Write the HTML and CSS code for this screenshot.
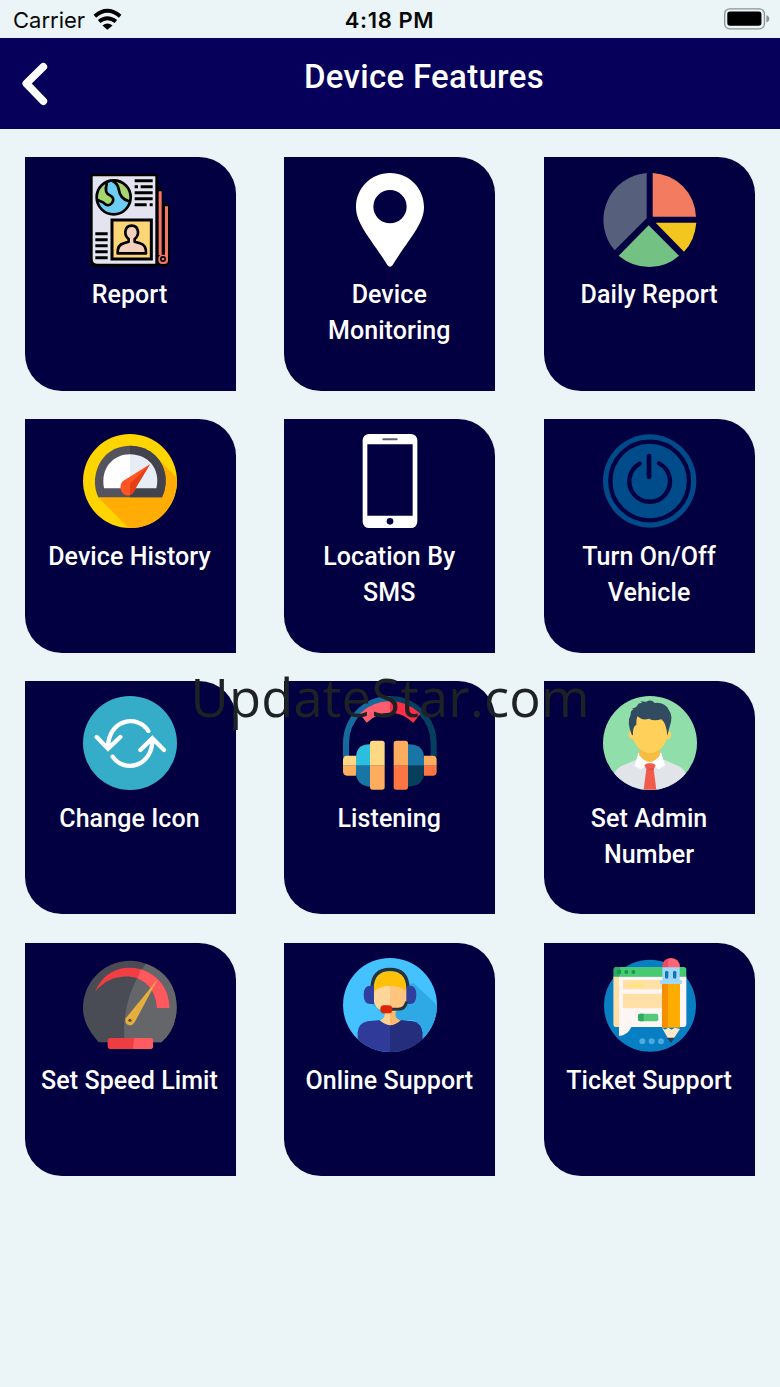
FILE: index.html
```html
<!DOCTYPE html>
<html lang="en">
<head>
<meta charset="utf-8">
<title>Device Features</title>
<link rel="stylesheet" href="styles.css">
</head>
<body>
<div class="screen">
  <div class="status">
    <div class="carrier"><span>Carrier</span>
      <svg class="wifi" viewBox="281 22 87 67"><g fill="none" stroke="#000" stroke-width="12"><path d="M286 47Q324 14 363 47"/><path d="M299 63Q324 43 350 63"/></g><path d="M309 75Q324 64 340 75L324 88Z"/></svg>
    </div>
    <div class="time">4:18 PM</div>
    <div class="power"><svg class="battery" viewBox="1002 24 140 67"><rect x="1004" y="26.500" width="121" height="61" rx="15" fill="none" stroke="#8d9292" stroke-width="4"/><rect x="1012" y="35" width="104" height="43" rx="8"/><path d="M1131 46Q1140 49 1140 57T1131 68Z" fill="#8d9292"/></svg></div>
  </div>
  <header class="bar">
    <svg class="back" viewBox="60 180 90 140"><path d="M130 200L79 250L130 303" fill="none" stroke="#fff" stroke-width="23" stroke-linecap="round" stroke-linejoin="round"/></svg>
    <h1>Device Features</h1>
  </header>
  <main class="grid">
    <div class="card">
      <svg viewBox="189 68 282 282">
        <path d="M411 106Q429 102 430 160Q450 155 450 180V330Q448 350 428 350L405 340Z"/>
        <rect x="211" y="70" width="203" height="279" rx="10"/>
        <path d="M218 78H406V340H230Q218 340 218 326Z" fill="#e3e4ef"/>
        <circle cx="281" cy="141" r="50" fill="#6dcdf3"/>
        <path d="M256 96Q233 110 231 146Q245 156 264 168Q281 162 278 145Q260 132 261 116ZM282 93Q292 100 296 119Q305 146 327 153Q334 130 321 112Q306 92 282 93Z" fill="#a8d66e"/>
        <path d="M261 98Q251 128 270 135Q286 143 276 158Q264 172 250 157L233 149M278 93Q292 98 296 116Q300 146 327 153" fill="none" stroke="#000" stroke-width="8"/>
        <circle cx="281" cy="141" r="51" fill="none" stroke="#000" stroke-width="8"/>
        <path d="M344 91H398M344 109H354M362 109H398M344 127H398M344 145H398M344 163H380M389 163H398M226 250H263M226 268H263M226 286H263M226 304H263M226 322H263" stroke="#000" stroke-width="9"/>
        <rect x="276" y="209" width="118" height="117" fill="#fcd577" stroke="#000" stroke-width="9"/>
        <path d="M293 309Q292 283 311 279L326 274V266Q315 258 316 244Q318 226 335 226T354 244Q355 258 344 266V274L360 279Q379 284 378 309Z" fill="#f2d0bb" stroke="#000" stroke-width="8" stroke-linejoin="round"/>
        <path d="M416 123H425V314H416ZM435 168H444V322H435Z" fill="#f57769"/>
        <rect x="415" y="313" width="29" height="28" rx="12" fill="#f57769"/><circle cx="429" cy="326" r="6.500" fill="#f57769" stroke="#000" stroke-width="5"/>
      </svg><p>Report</p>
    </div>
    <div class="card">
      <svg viewBox="0 0 282 282"><path fill="#fff" fill-rule="evenodd" d="M141 0C84 0 39 45 39 102C39 154 85 198 133 276Q141 287 149 276C197 198 243 154 243 102C243 45 198 0 141 0ZM141 51A50 50 0 1 1 141 151A50 50 0 1 1 141 51Z"/></svg>
      <p>Device Monitoring</p>
    </div>
    <div class="card">
      <svg viewBox="190 68 282 282"><path fill="#56607d" d="M321 68A141 141 0 0 0 225 300L321 204Z"/><path fill="#f37c60" d="M339 68V199H469A136 136 0 0 0 339 68Z"/><path fill="#f2c61f" d="M348 217H470Q465 271 433 304Z"/><path fill="#73c284" d="M327 225L418 316Q380 350 329 350T237 316Z"/></svg>
      <p>Daily Report</p>
    </div>
    <div class="card">
      <svg viewBox="189 59 282 282"><circle cx="330" cy="200" r="141" fill="#ffd500"/><path fill="#ffad05" d="M233 247L326 341Q394 342 435 295Q475 248 470 190L411 130Z"/><path fill="#55545e" d="M235 249Q223 224 225 195C230 135 272 94 330 94S435 137 437 195Q438 224 426 249Z"/><path fill="#43434d" d="M330 94C390 94 435 137 437 195Q438 224 426 249H330Z"/><path fill="#fff" d="M252 222C240 160 281 120 330 120V222Z"/><path fill="#e7edf6" d="M330 120C383 120 423 163 409 222H330Z"/><path fill="#ff5525" d="M390 150L309 200C292 217 306 244 325 244C340 241 344 229 350 216Z"/><path fill="#e63f16" d="M390 150L330 208V243Q343 236 350 216Z"/></svg>
      <p>Device History</p>
    </div>
    <div class="card">
      <svg viewBox="189 59 282 282"><rect x="248" y="59" width="164" height="282" rx="19" fill="#fff"/><path d="M262 90H398V304H262Z" fill="#020040"/><path d="M310 75H350" stroke="#5b5c78" stroke-width="6" stroke-linecap="round"/><circle cx="330" cy="321" r="10" fill="#020040"/></svg>
      <p>Location By SMS</p>
    </div>
    <div class="card">
      <svg viewBox="189 59 282 282"><circle cx="329" cy="200" r="140" fill="#004b8a"/><g fill="none" stroke="#020040"><circle cx="329" cy="200" r="118" stroke-width="13"/><path d="M299 148A61 61 0 1 0 357 147" stroke-width="13" stroke-linecap="round"/><path d="M327 125V188" stroke-width="14" stroke-linecap="round"/></g></svg>
      <p>Turn On/Off Vehicle</p>
    </div>
    <div class="card">
      <svg viewBox="189 79 282 282"><circle cx="330" cy="220" r="141" fill="#35acc8"/><path d="M385 184C355 134 264 146 264 235M230 202L264 237L301 202M278 261C311 311 399 292 397 208M361 241L397 206L432 241" fill="none" stroke="#fff" stroke-width="13" stroke-linecap="round"/></svg>
      <p>Change Icon</p>
    </div>
    <div class="card">
      <svg viewBox="189 79 282 282">
        <path d="M198 262V222A131 134 0 0 1 330 88" fill="none" stroke="#176a9c" stroke-width="18"/><path d="M330 88A131 134 0 0 1 461 222V262" fill="none" stroke="#073f60" stroke-width="18"/>
        <path fill="#ff5d6d" d="M239 132Q278 95 330 95V129Q293 128 260 159Z"/><path fill="#ff2e48" d="M330 95Q382 95 421 132L400 159Q367 128 330 129Z"/>
        <path fill="#ffd783" d="M228 258H201Q189 258 189 270V288H228Z"/><path fill="#fead5e" d="M189 288H228V318H201Q189 318 189 304Z"/>
        <path fill="#2cbedd" d="M270 224Q228 223 228 266V288H270Z"/><path fill="#1975a6" d="M228 288H270V351Q228 348 228 307Z"/>
        <path fill="#ffd884" d="M270 288V221Q270 213 278 213H306Q314 213 314 221V288Z"/><path fill="#fead5e" d="M270 288H314V352Q314 360 306 360H278Q270 360 270 352Z"/>
        <path fill="#fead5e" d="M341 288V221Q341 213 349 213H376Q384 213 384 221V288ZM432 258H458Q470 258 470 270V288H432Z"/><path fill="#fe7544" d="M341 288H384V352Q384 360 376 360H349Q341 360 341 352ZM432 288H470V306Q470 318 458 318H432Z"/>
        <path fill="#1975a6" d="M384 224Q432 223 432 266V288H384Z"/><path fill="#063f5b" d="M384 288H432V307Q432 350 384 351Z"/>
      </svg><p>Listening</p>
    </div>
    <div class="card">
      <svg viewBox="39 34 282 282">
        <clipPath id="adminClip"><circle cx="180" cy="175" r="141"/></clipPath><g clip-path="url(#adminClip)"><path fill="#90dfaa" d="M39 34H321V316H39Z"/><path fill="#e1e5ea" d="M55 316Q65 253 102 241L145 222H215L258 241Q295 253 305 316Z"/><path fill="#fff" d="M145 205L134 245L153 254L180 235L206 254L225 242L214 205Z"/><path fill="#f5bd43" d="M150 183H210V211Q180 253 147 211Z"/></g>
        <path fill="#ffd05a" d="M129 98Q180 62 232 98V139Q245 139 244 150Q242 164 230 164C219 195 199 205 180 205S139 190 130 164Q116 162 115 149Q117 137 129 139Z"/>
        <path fill="#314c60" d="M126 152Q109 112 122 90Q121 78 131 74L125 72Q135 71 141 65Q143 54 157 55Q151 49 150 49Q163 52 169 51Q184 43 194 55Q223 51 236 75Q252 94 238 129L232 153Q229 115 214 104Q190 110 177 102Q158 109 142 95Q138 107 139 120Q127 126 129 151Z"/>
        <path fill="#f15b4d" d="M163 242Q170 234 180 236Q190 234 197 242L191 254L199 315H161L169 254Z"/><path fill="#d94e43" d="M169 254L191 250V257Z"/>
      </svg><p>Set Admin Number</p>
    </div>
    <div class="card">
      <svg viewBox="69 54 282 282"><path fill="#4a4c55" d="M116 307C90 277 69 245 69 203C69 126 132 62 210 62S350 126 350 203Q349 268 304 307Z"/><path fill="#64666a" d="M258 71Q350 105 350 203Q349 268 304 307H194Q182 178 258 71Z"/><path fill="#f03e42" d="M106 154C130 97 175 82 211 83C280 85 328 138 328 204H291C287 153 256 114 211 110C171 106 133 121 106 154Z"/><path fill="#ff5960" d="M243 88Q326 119 328 204H291Q286 137 233 115Z"/><path fill="#e6af3d" d="M293 118L224 247Q218 257 207 256Q192 250 197 235Z"/><circle cx="210" cy="241" r="5" fill="#5f5445"/><rect x="143" y="294" width="136" height="33" rx="8" fill="#ee3d40"/><path fill="#ff5b60" d="M222 294H271Q279 294 279 302V319Q279 327 271 327H219Z"/></svg>
      <p>Set Speed Limit</p>
    </div>
    <div class="card">
      <svg viewBox="849 54 282 282">
        <clipPath id="agentClip"><circle cx="990" cy="195" r="141"/></clipPath><g clip-path="url(#agentClip)"><path fill="#43c2ff" d="M849 54H1131V336H849Z"/><path fill="#2fa9e6" d="M1060 129L1140 203V310L1085 320L1060 240H992L921 180Z"/><path fill="#303b99" d="M893 336V277Q895 250 922 244L970 239H1013L1056 244Q1084 249 1087 277V336Z"/><path fill="#252e7d" d="M990 239L1056 244Q1084 249 1087 277V336H990Z"/></g>
        <path fill="#ffd18e" d="M974 210H1006V229Q1012 240 1022 241Q990 270 959 241Q974 235 974 225Z"/><path fill="#ffb96e" d="M990 215H1006V229Q1012 240 1022 241Q1007 254 990 256Z"/>
        <path fill="#ffd59a" d="M941 137H1040V175Q1038 216 990 216T941 175Z"/><path fill="#ffc47e" d="M990 137H1040V175Q1038 216 990 216Z"/><path fill="#ffc107" d="M941 153C940 111 959 94 990 94S1041 111 1040 153Q1013 137 990 137T941 153Z"/>
        <path d="M936 144Q938 88 990 88T1044 144" fill="none" stroke="#26333c" stroke-width="10"/><path d="M942 136V192H931Q911 191 911 164T931 137ZM1039 137H1050Q1069 137 1069 164T1050 192H1039Z" fill="#303e9e"/><path d="M1040 185Q1035 208 1015 208H990" fill="none" stroke="#26333c" stroke-width="9"/><rect x="961" y="196" width="36" height="24" rx="11" fill="#dc2406"/>
      </svg><p>Online Support</p>
    </div>
    <div class="card">
      <svg viewBox="39 39 282 282">
        <circle cx="180" cy="182" r="138" fill="#087fc2"/><path fill="#fff5f4" d="M71 94H289V237Q289 246 280 246H124Q113 271 87 273V246H79Q71 246 71 238Z"/><path fill="#ffe0a2" d="M71 94H87V246H79Q71 246 71 238Z"/><path fill="#46cb72" d="M79 66H281Q289 66 289 74V95H71V74Q71 66 79 66Z"/><path fill="#2faa65" d="M71 94V74Q71 66 79 66H89Q95 77 87 95Z"/><g fill="#159755"><circle cx="87" cy="81" r="7"/><circle cx="109" cy="81" r="6"/><circle cx="130" cy="81" r="6"/></g>
        <path fill="#ffe1a7" d="M99 105H216V133H99ZM99 146H216V190H99Z"/><path fill="#ffe676" d="M110 119Q140 107 169 121Q137 132 110 119Z"/><rect x="144" y="206" width="61" height="23" rx="6" fill="#53ca79"/><path fill="#2cad62" d="M150 206H161V229H150Q144 229 144 223V212Q144 206 150 206Z"/>
        <path fill="#ffac00" d="M216 112H270V248H216Z"/><path fill="#f58f00" d="M216 112H234V248H216Z"/><path fill="#ffe9cb" d="M216 248L225 254L235 248L245 254L254 248L270 252L250 282H235Z"/><path fill="#273e55" d="M231 278H254L243 294Z"/><path fill="#ed4d60" d="M216 70Q217 39 243 39T270 70Z"/><path fill="#ff6375" d="M235 70V41Q270 38 270 70Z"/><path fill="#9ed9fa" d="M217 67H269V106H276V117H210V106H217Z"/><g fill="#1374b3"><rect x="225" y="77" width="10" height="24" rx="5"/><rect x="249" y="77" width="10" height="24" rx="5"/></g><g fill="#4da9df"><circle cx="157" cy="289" r="9"/><circle cx="185" cy="289" r="9"/><circle cx="213" cy="289" r="9"/></g>
      </svg><p>Ticket Support</p>
    </div>
  </main>
  <div class="watermark">UpdateStar.com</div>
</div>
</body>
</html>
```
FILE: styles.css
```css
* { box-sizing: border-box; }
body { margin: 0; background: #ebf4f6; font-family: Roboto, sans-serif; }
.screen { position: relative; height: 1387px; overflow: hidden; }
.status { height: 38px; display: grid; grid-template-columns: 1fr auto 1fr; align-items: center; padding: 2px 10px 0 13px; font: 400 22px/30px Inter, sans-serif; color: #080a0a; }
.carrier { display: flex; align-items: center; gap: 8px; }
.wifi { width: 29px; height: 22px; margin-top: -3px; }
.time { font-weight: 600; letter-spacing: .6px; margin-left: -4px; }
.power { display: flex; justify-content: flex-end; }
.battery { width: 46px; height: 22px; margin-top: -2px; }
.bar { height: 91.3px; background: #06005a; color: #fff; display: flex; align-items: flex-start; padding: 22px 0 0 20px; }
.back { width: 30px; height: 47px; flex: none; }
h1 { flex: 1; margin: -3px 0 0 18px; text-align: center; font-weight: 500; font-size: 33px; line-height: 40px; letter-spacing: .3px; }
.grid { display: grid; grid-template-columns: repeat(3, 211px); gap: 28.2px 48.8px; grid-auto-rows: 233.7px; padding: 27.7px 0 0 24.7px; }
.card { background: #020040; border-radius: 0 37px 0 37px; padding-top: 15.6px; display: flex; flex-direction: column; align-items: center; color: #fff; }
.card svg { width: 94px; height: 94px; flex: none; }
.card p { width: 184px; margin: 10.4px 1.4px 0 0; text-align: center; font-weight: 500; font-size: 25px; line-height: 36.4px; letter-spacing: .08px; }
.watermark { position: absolute; left: 190.5px; top: 663px; font: 400 52.4px/68px "Open Sans", sans-serif; letter-spacing: .2px; color: #1e2225; white-space: nowrap; }
```
